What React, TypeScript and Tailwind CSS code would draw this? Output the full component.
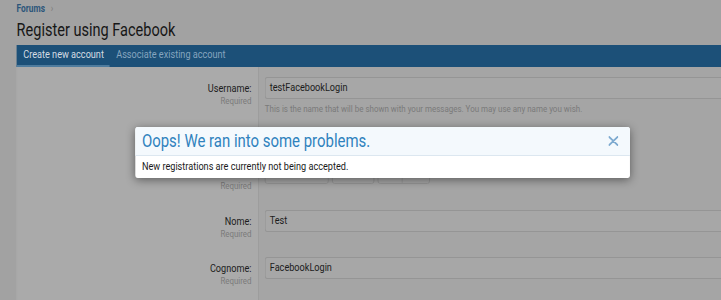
import React from 'react';

const font = { fontFamily: 'Roboto, "Noto Sans", sans-serif' };

// the reference shot is squeezed sideways, so the page is laid out wider and scaled back
function Row({ label, children, h }: { label: string; children: React.ReactNode; h: string }) {
  return (
    <div className={`flex ${h}`}>
      <div className="w-[290px] shrink-0 bg-[#aaaaaa] pr-[8px] pt-[15px] text-right">
        <div className="text-[11px] leading-[14px] text-[#1c1c1c]">{label}:</div>
        <div className="text-[9.5px] leading-[10px] text-[#7a7a7a]">Required</div>
      </div>
      <div className="flex-1 border-l border-[#9c9c9c] bg-[#a5a5a5] pl-[7px] pt-[10px]">{children}</div>
    </div>
  );
}

function Input({ value }: { value: string }) {
  return (
    <div className="h-[22px] rounded-l-[3px] border border-r-0 border-[#959595] bg-[#a7a7a7] pl-[5px] text-[11px] leading-[20px] text-[#1c1c1c]">
      {value}
    </div>
  );
}

export default function App() {
  return (
    <div className="h-[300px] w-[721px] overflow-hidden bg-[#a2a2a2]" style={font}>
      <div className="relative h-[300px] w-[869px] origin-top-left scale-x-[0.83]">
        {/* Breadcrumb + title */}
        <div className="pl-[20px] pt-[3px]">
          <div className="flex items-center gap-[7px] text-[10px] font-bold leading-[12px] text-[#2b557a]">
            Forums <span className="font-normal text-[#7c7c7c]">›</span>
          </div>
          <h1 className="mt-[4px] text-[17.5px] leading-[22px] text-[#161616]">Register using Facebook</h1>
        </div>

        {/* Tabs */}
        <div className="ml-[20px] mt-[4px] flex h-[22px] bg-[#1c5078] text-[11px] leading-[20px]">
          <div className="w-[112px] border-b-2 border-[#4f7c9e] pl-[8px] text-[#d5dde4]">Create new account</div>
          <div className="pl-[8px] text-[#86a5bf]">Associate existing account</div>
        </div>

        {/* Form */}
        <div className="ml-[20px] border-l border-[#b0b0b0]">
          <Row label="Username" h="h-[85px]">
            <Input value="testFacebookLogin" />
            <div className="mt-[4px] text-[9.6px] leading-[12px] text-[#7a7a7a]">
              This is the name that will be shown with your messages. You may use any name you wish.
            </div>
          </Row>
          <Row label="Date of birth" h="h-[48px]">
            <div className="flex gap-[4px] text-[11px] leading-[20px] text-[#1c1c1c]">
              <div className="h-[22px] w-[77px] rounded-[3px] border border-[#959595] bg-[#a7a7a7] pl-[6px]">January</div>
              <div className="h-[22px] w-[51px] rounded-[3px] border border-[#959595] bg-[#a7a7a7] pl-[6px]">12</div>
              <div className="flex h-[22px] w-[63px] rounded-[3px] border border-[#959595] bg-[#a7a7a7]">
                <div className="w-[29px] border-r border-[#959595]" />
              </div>
            </div>
          </Row>
          <Row label="Nome" h="h-[47px]">
            <Input value="Test" />
          </Row>
          <Row label="Cognome" h="h-[60px]">
            <Input value="FacebookLogin" />
          </Row>
        </div>

        {/* Error dialog */}
        <div className="absolute left-[163px] top-[127px] w-[596px] rounded-[3px] bg-white shadow-[0_2px_10px_rgba(0,0,0,0.45)]">
          <div className="flex h-[29px] items-center justify-between rounded-t-[3px] border-b border-[#dce7f0] bg-[#f4f9fd] pl-[8px] pr-[14px]">
            <span className="text-[18px] leading-[20px] text-[#2f82bd]">Oops! We ran into some problems.</span>
            <svg width="12" height="10" viewBox="0 0 12 10">
              <path d="M1 1 L11 9 M11 1 L1 9" stroke="#7eaad0" strokeWidth="2" strokeLinecap="round" />
            </svg>
          </div>
          <div className="h-[22px] pl-[8px] text-[11px] leading-[22px] text-[#1a1a1a]">
            New registrations are currently not being accepted.
          </div>
        </div>
      </div>
    </div>
  );
}
